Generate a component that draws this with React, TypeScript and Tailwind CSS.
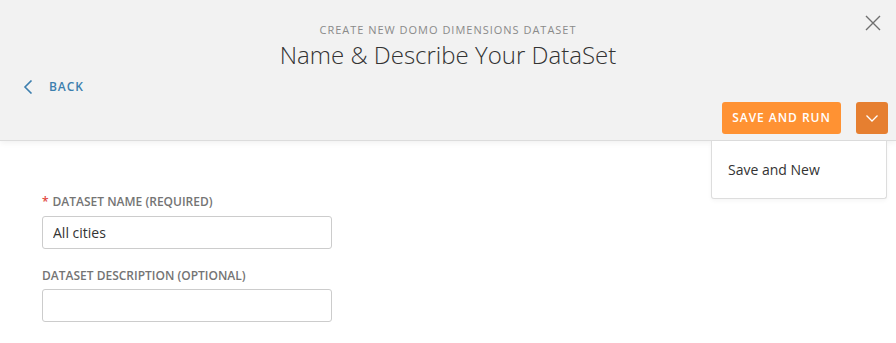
import { useState } from 'react';

function CloseIcon() {
  return (
    <svg width='16' height='16' viewBox='0 0 16 16' fill='none' stroke='#6f6f6f' strokeWidth='1.4'>
      <path d='M1 1 L15 15 M15 1 L1 15' />
    </svg>
  );
}

function ChevronLeft() {
  return (
    <svg width='10' height='14' viewBox='0 0 10 14' fill='none' stroke='#3d7fae' strokeWidth='1.6'>
      <path d='M8.5 0.5 L2 7 L8.5 13.5' />
    </svg>
  );
}

function ChevronDown() {
  return (
    <svg width='12' height='7' viewBox='0 0 12 7' fill='none' stroke='#ffffff' strokeWidth='1.3'>
      <path d='M0.5 0.5 L6 6 L11.5 0.5' />
    </svg>
  );
}

export default function App() {
  const [name, setName] = useState('All cities');
  const [description, setDescription] = useState('');

  return (
    <div className="relative h-[343px] w-[896px] overflow-hidden bg-white font-['Open_Sans',sans-serif]">
      {/* header */}
      <header className='relative h-[141px] border-b border-[#dcdcdc] bg-[#f2f2f2] shadow-[0_2px_6px_rgba(0,0,0,0.06)]'>
        <button className='absolute right-[15px] top-[15px]'>
          <CloseIcon />
        </button>

        <div className='flex flex-col items-center pt-[22px]'>
          <div className='text-[11px] leading-[16px] tracking-[0.09em] text-[#8a8a8a]'>
            CREATE NEW DOMO DIMENSIONS DATASET
          </div>
          <h1 className='mt-[1px] text-[24px] font-light leading-[32px] text-[#333333]'>
            Name &amp; Describe Your DataSet
          </h1>
        </div>

        <button className='ml-[23px] mt-[8px] flex items-center gap-[16px]'>
          <ChevronLeft />
          <span className='text-[12px] font-semibold leading-[16px] tracking-[0.08em] text-[#3d7fae]'>BACK</span>
        </button>

        <div className='mr-[8px] mt-[7px] flex justify-end gap-[15px]'>
          <button className='h-[32px] w-[119px] rounded-[3px] bg-[#ff9233] text-[12px] font-semibold tracking-[0.08em] text-white'>
            SAVE AND RUN
          </button>
          <button className='flex h-[32px] w-[32px] items-center justify-center rounded-[3px] bg-[#e67f30]'>
            <ChevronDown />
          </button>
        </div>
      </header>

      {/* dropdown menu */}
      <div className='absolute right-[9px] top-[141px] z-10 w-[176px] rounded-b-[3px] border border-t-0 border-[#dddddd] bg-white shadow-[0_2px_4px_rgba(0,0,0,0.04)]'>
        <div className='flex h-[57px] items-center pl-[16px] text-[14px] text-[#333333]'>Save and New</div>
      </div>

      {/* form */}
      <form className='pl-[42px] pt-[53px]'>
        <label className='flex items-center text-[12px] font-semibold leading-[16px] text-[#747474]'>
          <span className='mr-[4px] text-[#e2463d]'>*</span>
          DATASET NAME (REQUIRED)
        </label>
        <input
          value={name}
          onChange={(e) => setName(e.target.value)}
          className='mt-[6px] block h-[33px] w-[290px] rounded-[3px] border border-[#cccccc] bg-white px-[10px] text-[14px] text-[#333333] outline-none'
        />
        <label className='mt-[19px] block text-[12px] font-semibold leading-[16px] text-[#747474]'>
          DATASET DESCRIPTION (OPTIONAL)
        </label>
        <input
          value={description}
          onChange={(e) => setDescription(e.target.value)}
          className='mt-[5px] block h-[33px] w-[290px] rounded-[3px] border border-[#cccccc] bg-white px-[10px] text-[14px] text-[#333333] outline-none'
        />
      </form>
    </div>
  );
}
